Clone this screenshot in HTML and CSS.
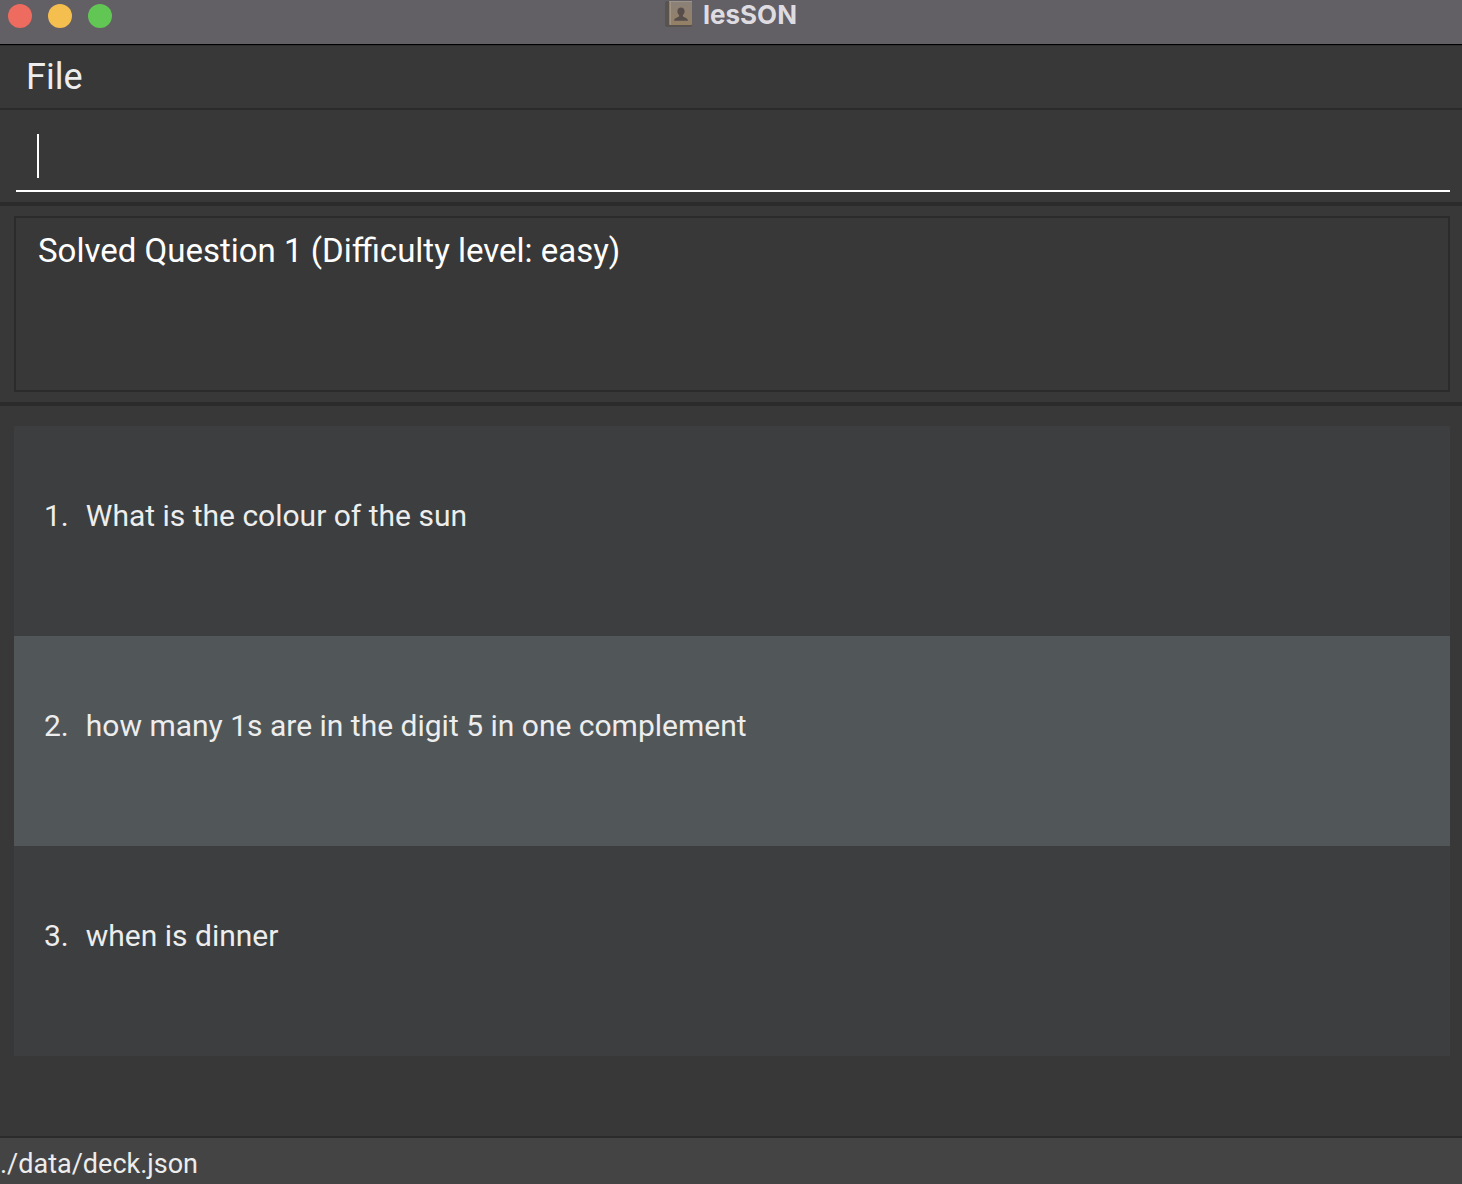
FILE: index.html
```html
<!DOCTYPE html>
<html lang="en">
<head>
<meta charset="utf-8">
<meta name="viewport" content="width=device-width, initial-scale=1">
<title>lesSON</title>
<link rel="stylesheet" href="styles.css">
</head>
<body>
<div class="window">
  <header class="titlebar">
    <div class="controls">
      <button type="button" class="control close" aria-label="Close"></button>
      <button type="button" class="control minimize" aria-label="Minimize"></button>
      <button type="button" class="control maximize" aria-label="Maximize"></button>
    </div>
    <svg class="app-icon" viewBox="0 0 28 28" aria-hidden="true">
      <defs>
        <linearGradient id="cover" x1="0" y1="0" x2="0" y2="1">
          <stop offset="0" stop-color="#8b8179"/>
          <stop offset="1" stop-color="#948065"/>
        </linearGradient>
      </defs>
      <rect x="0" y="1" width="27" height="26" rx="2" fill="#59534f"/>
      <rect x="4" y="1" width="23" height="24" rx="1" fill="url(#cover)"/>
      <path d="M4 1.500H27" stroke="#9b9389"/>
      <path d="M5.500 2V25" stroke="#a19482"/>
      <path d="M16 7.500c2.200 0 3.600 1.500 3.600 3.800 0 1.700-.7 3-1.700 3.700v1.300c.4 1 4.800 1.200 5.100 4.500H9c.3-3.300 4.700-3.500 5.100-4.500V15c-1-.7-1.700-2-1.700-3.700 0-2.300 1.400-3.800 3.600-3.800z" fill="#574e4b"/>
    </svg>
    <h1 class="title">lesSON</h1>
  </header>
  <nav class="menubar">
    <button type="button" class="menu">File</button>
  </nav>
  <form class="command">
    <input class="command-input" type="text" aria-label="Command" autocomplete="off">
  </form>
  <section class="result">
    <output class="result-text">Solved Question 1 (Difficulty level: easy)</output>
  </section>
  <main class="deck">
    <ul class="cards">
      <li class="card"><span>1.</span><span>What is the colour of the sun</span></li>
      <li class="card"><span>2.</span><span>how many 1s are in the digit 5 in one complement</span></li>
      <li class="card"><span>3.</span><span>when is dinner</span></li>
    </ul>
  </main>
  <footer class="status">./data/deck.json</footer>
</div>
</body>
</html>
```
FILE: styles.css
```css
* {
  box-sizing: border-box;
}

body {
  margin: 0;
  background: #383838;
  color: #ededed;
  font-family: Roboto, "Liberation Sans", sans-serif;
}

.window {
  display: flex;
  flex-direction: column;
  min-height: 100vh;
}

.titlebar {
  display: grid;
  grid-template-columns: 1fr auto auto 1fr;
  column-gap: 10px;
  height: 45px;
  background: #625f65;
  border-bottom: 1px solid #000;
}

.controls {
  display: flex;
  gap: 16px;
  padding: 4px 8px;
}

.control {
  width: 24px;
  height: 24px;
  padding: 0;
  border: 0;
  border-radius: 50%;
}

.close {
  background: #ed6b5f;
}

.minimize {
  background: #f5bf4f;
}

.maximize {
  background: #62c655;
}

.app-icon {
  width: 28px;
  height: 28px;
}

.title {
  margin: 0;
  color: #dedce0;
  font-family: Inter, sans-serif;
  font-size: 26px;
  font-weight: 700;
  line-height: 30px;
}

.menubar {
  display: flex;
  height: 65px;
  padding: 0 16px;
  border-top: 1px solid #2e2e2e;
  border-bottom: 2px solid #2b2b2b;
}

.menu {
  padding: 0 10px;
  border: 0;
  background: none;
  color: inherit;
  font-family: inherit;
  font-size: 36px;
}

.command {
  padding: 10px 12px 10px 16px;
  border-bottom: 4px solid #2b2b2b;
}

.command-input {
  display: block;
  width: 100%;
  height: 72px;
  padding: 0 24px;
  border: 0;
  border-bottom: 2px solid #fff;
  outline: 0;
  background: linear-gradient(#fff, #fff) 21px 14px / 2px 44px no-repeat;
  color: #fff;
  font-family: inherit;
  font-size: 36px;
}

.result {
  padding: 10px 12px 10px 14px;
  border-bottom: 4px solid #2b2b2b;
}

.result-text {
  display: block;
  min-height: 176px;
  padding: 13px 22px;
  border: 2px solid #2b2b2b;
  color: #fff;
  font-size: 33px;
  line-height: 40px;
}

.deck {
  flex: 1;
  padding: 20px 12px 20px 14px;
}

.cards {
  margin: 0;
  padding: 0;
  list-style: none;
}

.card {
  display: flex;
  align-items: flex-start;
  gap: 17px;
  min-height: 210px;
  padding: 70px 30px;
  background: #3c3e3f;
  font-size: 30px;
  line-height: 40px;
}

.card:nth-child(even) {
  background: #515658;
}

.status {
  min-height: 48px;
  padding: 8px 0 2px;
  border-top: 2px solid #2b2b2b;
  background: #444;
  font-size: 27px;
  line-height: 36px;
}
```
